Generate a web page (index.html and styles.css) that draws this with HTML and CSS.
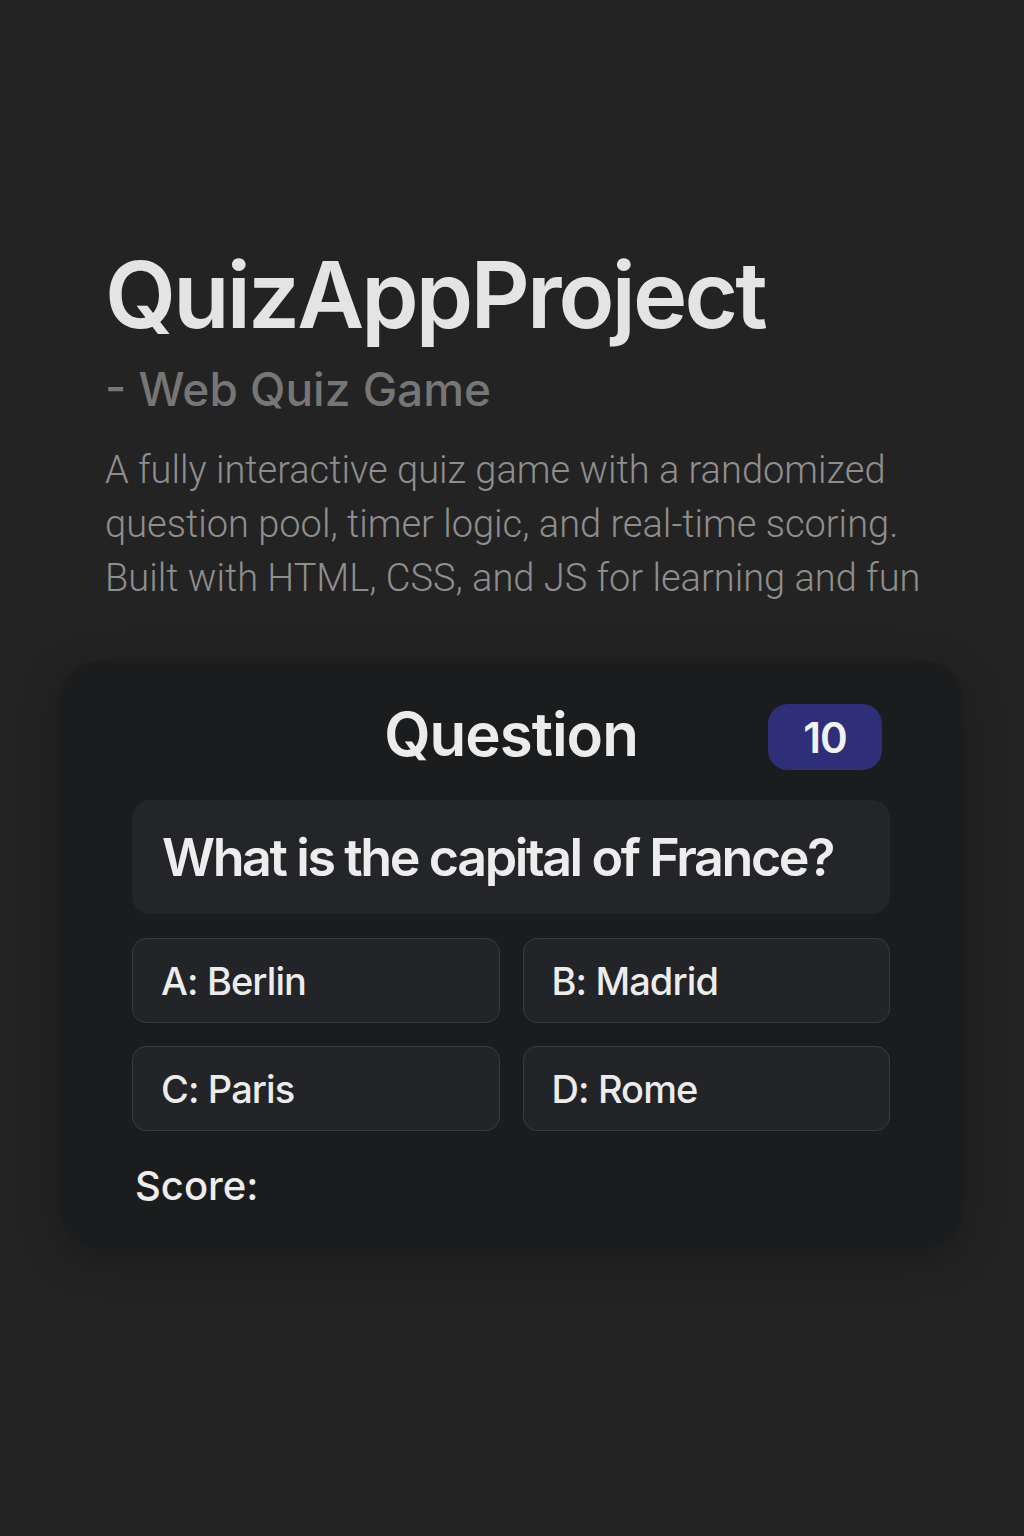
FILE: index.html
```html
<!DOCTYPE html>
<html lang="en">
<head>
<meta charset="utf-8">
<title>QuizAppProject</title>
<link rel="stylesheet" href="styles.css">
</head>
<body>
<main class="page">
  <header class="hero">
    <h1 class="title">QuizAppProject</h1>
    <p class="subtitle">- Web Quiz Game</p>
    <p class="desc">A fully interactive quiz game with a randomized question pool, timer logic, and real-time scoring. Built with HTML, CSS, and JS for learning and fun</p>
  </header>
  <section class="card">
    <div class="card-head">
      <span class="spacer"></span>
      <h2 class="card-title">Question</h2>
      <span class="badge">10</span>
    </div>
    <div class="question">What is the capital of France?</div>
    <div class="answers">
      <button class="answer">A: Berlin</button>
      <button class="answer">B: Madrid</button>
      <button class="answer">C: Paris</button>
      <button class="answer">D: Rome</button>
    </div>
    <p class="score">Score:</p>
  </section>
</main>
</body>
</html>
```
FILE: styles.css
```css
* { box-sizing: border-box; }
html, body { margin: 0; padding: 0; }
body {
  background: #232323;
  width: 1024px;
  min-height: 1536px;
  font-family: Inter, "Noto Sans", sans-serif;
  color: #e6e6e6;
}
.page { padding-top: 240px; }
.hero { padding: 0 0 0 105px; }
.title {
  margin: 0;
  font-size: 92px;
  line-height: 110px;
  font-weight: 600;
  letter-spacing: -2.85px;
  color: #e4e4e4;
}
.subtitle {
  margin: 9px 0 0;
  font-size: 46px;
  line-height: 60px;
  font-weight: 500;
  color: #767676;
}
.desc {
  margin: 24px 0 0;
  width: 840px;
  font-family: Roboto, sans-serif;
  font-size: 38px;
  line-height: 54px;
  font-weight: 300;
  color: #8e8e8e;
}
.card {
  margin: 56px 0 0 60px;
  width: 903px;
  background: #1b1c1e;
  border-radius: 40px;
  padding: 41px 73px 30px 72px;
  box-shadow: 0 10px 40px rgba(0,0,0,0.25);
}
.card-head {
  display: grid;
  grid-template-columns: 1fr auto 1fr;
  align-items: center;
}
.card-title {
  margin: 0;
  padding-bottom: 6px;
  font-size: 60px;
  line-height: 64px;
  font-weight: 600;
  letter-spacing: -1px;
  color: #ececec;
}
.badge {
  justify-self: end;
  margin-right: 8px;
  width: 114px;
  height: 66px;
  border-radius: 20px;
  background: #2e2f78;
  color: #f2f2f2;
  font-size: 42px;
  font-weight: 600;
  letter-spacing: -1px;
  display: flex;
  align-items: center;
  justify-content: center;
}
.question {
  margin-top: 28px;
  background: #232528;
  border-radius: 18px;
  height: 114px;
  padding: 0 30px;
  display: flex;
  align-items: center;
  font-size: 52px;
  font-weight: 600;
  letter-spacing: -2.4px;
  white-space: nowrap;
  color: #ededed;
}
.answers {
  margin-top: 24px;
  display: grid;
  grid-template-columns: 1fr 1fr;
  gap: 23px;
}
.answer {
  height: 85px;
  background: #222427;
  border: 1.5px solid #383a3e;
  border-radius: 14px;
  padding: 0 28px;
  text-align: left;
  font-family: Inter, "Noto Sans", sans-serif;
  font-size: 38px;
  font-weight: 500;
  letter-spacing: -0.9px;
  color: #ececec;
}
.score {
  margin: 23px 0 0 3px;
  font-size: 40px;
  line-height: 64px;
  font-weight: 500;
  color: #ededed;
}
```
